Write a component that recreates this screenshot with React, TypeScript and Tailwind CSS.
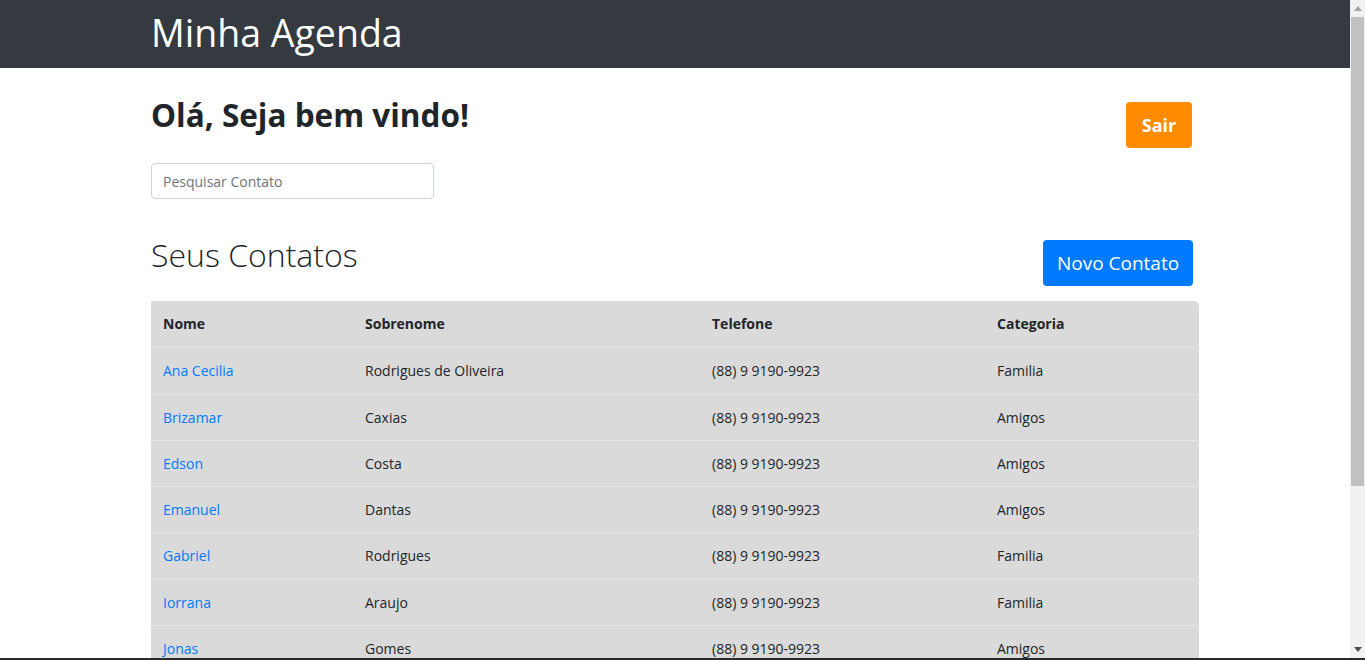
const FONT = { fontFamily: '"Segoe UI", "Open Sans", "Noto Sans", sans-serif' };

type Contato = { nome: string; sobrenome: string; telefone: string; categoria: string };

const CONTATOS: Contato[] = [
  { nome: "Ana Cecilia", sobrenome: "Rodrigues de Oliveira", telefone: "(88) 9 9190-9923", categoria: "Familia" },
  { nome: "Brizamar", sobrenome: "Caxias", telefone: "(88) 9 9190-9923", categoria: "Amigos" },
  { nome: "Edson", sobrenome: "Costa", telefone: "(88) 9 9190-9923", categoria: "Amigos" },
  { nome: "Emanuel", sobrenome: "Dantas", telefone: "(88) 9 9190-9923", categoria: "Amigos" },
  { nome: "Gabriel", sobrenome: "Rodrigues", telefone: "(88) 9 9190-9923", categoria: "Familia" },
  { nome: "Iorrana", sobrenome: "Araujo", telefone: "(88) 9 9190-9923", categoria: "Familia" },
  { nome: "Jonas", sobrenome: "Gomes", telefone: "(88) 9 9190-9923", categoria: "Amigos" },
];

function Scrollbar() {
  return (
    <div className="w-[15px] h-full bg-[#f1f1f1] flex flex-col items-center">
      <div className="h-[17px] w-full flex items-center justify-center">
        <svg width="8" height="5" viewBox="0 0 8 5"><path d="M0 5 L4 0 L8 5 Z" fill="#a3a3a3" /></svg>
      </div>
      <div className="w-[13px] h-[469px] bg-[#c1c1c1]" />
      <div className="flex-1" />
      <div className="h-[17px] w-full flex items-center justify-center">
        <svg width="8" height="5" viewBox="0 0 8 5"><path d="M0 0 L8 0 L4 5 Z" fill="#505050" /></svg>
      </div>
    </div>
  );
}

export default function App() {
  return (
    <div className="w-[1365px] h-[660px] overflow-hidden flex flex-col bg-white text-[#212529]" style={FONT}>
      <div className="flex h-[658px]">
        <div className="flex-1 h-full overflow-hidden">
          <nav className="h-[68px] bg-[#343a40]">
            <div className="w-[1048px] mx-auto h-full flex items-center">
              <h1 className="text-[37.5px] leading-none text-white pb-[3px]">Minha Agenda</h1>
            </div>
          </nav>

          <main className="w-[1048px] mx-auto pt-[28px]">
            <div className="flex items-start justify-between">
              <h2 className="text-[31.5px] leading-[38px] font-bold">Olá, Seja bem vindo!</h2>
              <button className="mt-[6px] mr-[7px] h-[46px] w-[66px] rounded-[4px] bg-[#ff8c00] text-white text-[18px] font-bold">
                Sair
              </button>
            </div>

            <input
              placeholder="Pesquisar Contato"
              className="mt-[15px] block w-[283px] h-[36px] px-[11px] border border-[#ced4da] rounded-[4px] text-[14px] placeholder:text-[#6c757d] outline-none"
            />

            <div className="mt-[32px] flex items-start justify-between">
              <h2 className="text-[32px] leading-[44px] font-light pt-[2px]">Seus Contatos</h2>
              <button className="mt-[9px] mr-[6px] h-[46px] w-[150px] rounded-[4px] bg-[#007bff] text-white text-[19px]">
                Novo Contato
              </button>
            </div>

            <table className="mt-[15px] w-full table-fixed border-collapse bg-[#dadada] rounded-tr-[5px] text-[14px] leading-[21.3px]">
              <colgroup>
                <col className="w-[202px]" />
                <col className="w-[347px]" />
                <col className="w-[285px]" />
                <col className="w-[214px]" />
              </colgroup>
              <thead>
                <tr className="text-left">
                  <th className="px-3 pt-[12px] pb-[13px] font-bold">Nome</th>
                  <th className="px-3 pt-[12px] pb-[13px] font-bold">Sobrenome</th>
                  <th className="px-3 pt-[12px] pb-[13px] font-bold">Telefone</th>
                  <th className="px-3 pt-[12px] pb-[13px] font-bold">Categoria</th>
                </tr>
              </thead>
              <tbody>
                {CONTATOS.map((c) => (
                  <tr key={c.nome} className="border-t border-[#e4e4e6]">
                    <td className="px-3 py-3">
                      <a href="#" className="text-[#007bff]">{c.nome}</a>
                    </td>
                    <td className="px-3 py-3">{c.sobrenome}</td>
                    <td className="px-3 py-3">{c.telefone}</td>
                    <td className="px-3 py-3">{c.categoria}</td>
                  </tr>
                ))}
              </tbody>
            </table>
          </main>
        </div>
        <Scrollbar />
      </div>
      <div className="h-[2px] bg-[#2b2b2b]" />
    </div>
  );
}
